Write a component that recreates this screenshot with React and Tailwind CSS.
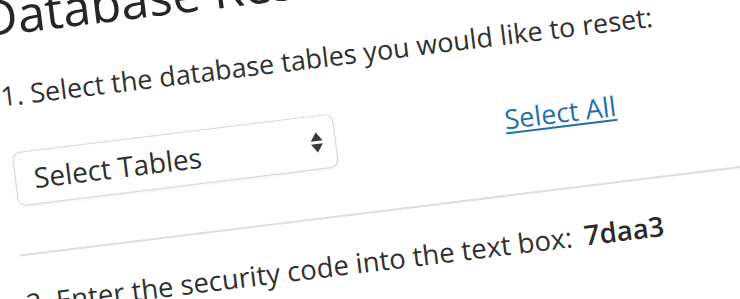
import React from "react";

function SortArrows() {
  return (
    <svg width="14" height="24" viewBox="0 0 14 24" aria-hidden="true">
      <polygon points="1,10.5 13,10.5 7,2" fill="#3a3a3a" />
      <polygon points="1,13.5 13,13.5 7,22" fill="#3a3a3a" />
    </svg>
  );
}

export default function App() {
  return (
    <div
      className="w-[740px] h-[299px] overflow-hidden bg-white"
      style={{ fontFamily: '"Open Sans", "Noto Sans", sans-serif' }}
    >
      <div className="w-[900px] origin-top-left -rotate-[7deg] text-[#303030]">
        <h1 className="-ml-[22px] -mt-[9px] text-[50px] leading-[50px] font-normal text-[#262626] whitespace-nowrap">
          Database Reset
        </h1>
        <p className="-ml-[12px] mt-[37px] text-[27px] leading-[36px] whitespace-nowrap">
          1. Select the database tables you would like to reset:
        </p>
        <div className="-ml-[8px] mt-[39px] flex items-center">
          <div className="w-[323px] h-[54px] flex items-center justify-between pl-[18px] pr-[11px] rounded-[8px] border border-[#d6d6d6] bg-white shadow-[0_1px_3px_rgba(0,0,0,0.08)]">
            <span className="text-[28px] leading-[36px] text-[#2e2e2e]">Select Tables</span>
            <SortArrows />
          </div>
          <a
            href="#"
            className="ml-[170px] text-[27px] leading-[36px] text-[#1f6fa8] underline decoration-[2px] underline-offset-[3px] whitespace-nowrap"
          >
            Select All
          </a>
        </div>
        <div className="-ml-[13px] mt-[48px] h-[2px] w-[920px] bg-[#dedede]" />
        <p className="-ml-[12px] mt-[30px] text-[27.5px] leading-[36px] whitespace-nowrap">
          <span>2. Enter the security code into the text box:</span>
          <strong className="ml-[12px] font-semibold text-[#2a2a2a]">7daa3</strong>
        </p>
      </div>
    </div>
  );
}
